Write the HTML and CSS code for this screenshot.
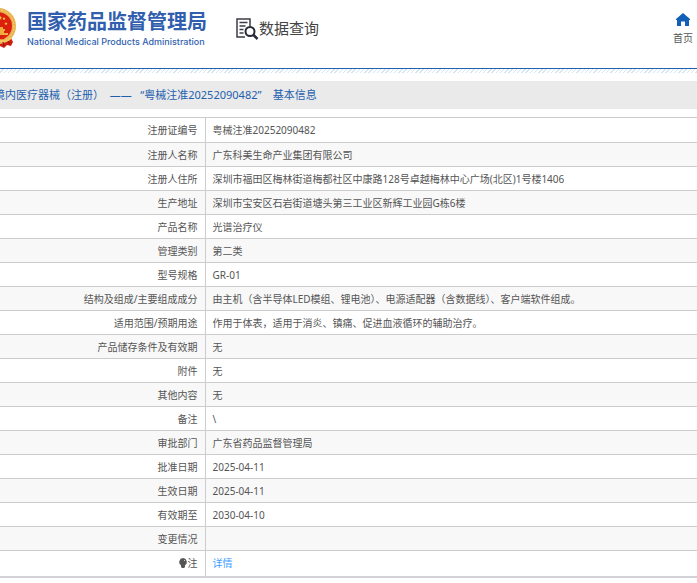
FILE: index.html
```html
<!DOCTYPE html>
<html lang="zh-CN">
<head>
<meta charset="utf-8">
<title>国家药品监督管理局 数据查询</title>
<link rel="stylesheet" href="styles.css">
</head>
<body>
<header class="header">
  <svg class="emblem" viewBox="0 0 17 40" aria-hidden="true">
    <path d="M0 31 L11 30 L13 34 L11 38 L7 37 L4 40 L0 38 Z" fill="#cf2013"/>
    <circle cx="-2" cy="18" r="18" fill="#e9b04c"/>
    <circle cx="-2" cy="18" r="16" fill="none" stroke="#f6d57c" stroke-width="1" stroke-dasharray="2 1"/>
    <circle cx="-2" cy="18" r="14" fill="#dd1f10"/>
    <path d="M0 8l1 1 1 .3-1 1 .3 1.400L0 11zM4 9l.5 1 1.100.2-.8.8.200 1.100-1-.5-1 .5.200-1.100-.8-.8 1.100-.2zM6 14l.5 1 1.100.2-.8.8.200 1.100-1-.5-1 .5.200-1.100-.8-.8 1.100-.2z" fill="#f8c53f"/>
    <path d="M0 19h3v2h2v2H4v2h4v2H0z" fill="#f0ad3e"/>
    <path d="M0 32q7 3 11-2" fill="none" stroke="#f3c65c" stroke-width="1.500"/>
    <path d="M3 34l1 4M8 33l2 3" stroke="#951008" stroke-width="1"/>
  </svg>
  <div class="brand">
    <div class="brand-cn">国家药品监督管理局</div>
    <div class="brand-en">National Medical Products Administration</div>
  </div>
  <div class="section">
    <svg class="section-icon" viewBox="0 0 23 22" aria-hidden="true">
      <path d="M14 8V1H1v18h8" fill="none" stroke="#3c3c46" stroke-width="1.500"/>
      <path d="M3.500 4.500h8M3.500 8h6M3.500 11.500h4M3.500 15h4" stroke="#3c3c46" stroke-width="1.300"/>
      <circle cx="14" cy="13.500" r="4.500" fill="#fff" stroke="#262838" stroke-width="2"/>
      <path d="M17.500 17l4 4" stroke="#262838" stroke-width="2.500"/>
    </svg>
    <span>数据查询</span>
  </div>
  <a class="home" href="#">
    <svg class="home-icon" viewBox="0 0 14 13" aria-hidden="true">
      <path d="M7 0l7 6v1h-1v6H9V8.500H5V13H1V7H0V6z" fill="#1160b5"/>
    </svg>
    <span>首页</span>
  </a>
</header>
<main>
  <h1 class="title">境内医疗器械（注册）&nbsp; ——&nbsp; &nbsp;“粤械注准20252090482”&nbsp; &nbsp; 基本信息</h1>
  <table class="info">
    <tbody>
      <tr><th scope="row">注册证编号</th><td>粤械注准20252090482</td></tr>
      <tr><th scope="row">注册人名称</th><td>广东科美生命产业集团有限公司</td></tr>
      <tr><th scope="row">注册人住所</th><td>深圳市福田区梅林街道梅都社区中康路128号卓越梅林中心广场(北区)1号楼1406</td></tr>
      <tr><th scope="row">生产地址</th><td>深圳市宝安区石岩街道塘头第三工业区新辉工业园G栋6楼</td></tr>
      <tr><th scope="row">产品名称</th><td>光谱治疗仪</td></tr>
      <tr><th scope="row">管理类别</th><td>第二类</td></tr>
      <tr><th scope="row">型号规格</th><td>GR-01</td></tr>
      <tr><th scope="row">结构及组成/主要组成成分</th><td>由主机（含半导体LED模组、锂电池）、电源适配器（含数据线）、客户端软件组成。</td></tr>
      <tr><th scope="row">适用范围/预期用途</th><td>作用于体表，适用于消炎、镇痛、促进血液循环的辅助治疗。</td></tr>
      <tr><th scope="row">产品储存条件及有效期</th><td>无</td></tr>
      <tr><th scope="row">附件</th><td>无</td></tr>
      <tr><th scope="row">其他内容</th><td>无</td></tr>
      <tr><th scope="row">备注</th><td>\</td></tr>
      <tr><th scope="row">审批部门</th><td>广东省药品监督管理局</td></tr>
      <tr><th scope="row">批准日期</th><td>2025-04-11</td></tr>
      <tr><th scope="row">生效日期</th><td>2025-04-11</td></tr>
      <tr><th scope="row">有效期至</th><td>2030-04-10</td></tr>
      <tr><th scope="row">变更情况</th><td></td></tr>
      <tr><th scope="row"><svg class="bulb" viewBox="0 0 8 10" aria-hidden="true"><path d="M4 0a4 4 0 0 1 2 7.300V9L5 10H3L2 9V7.300A4 4 0 0 1 4 0z" fill="#555"/><path d="M5 2l1 1" stroke="#ccc"/></svg>注</th><td><a href="#">详情</a></td></tr>
    </tbody>
  </table>
</main>
</body>
</html>
```
FILE: styles.css
```css
* {
  box-sizing: border-box;
}

body {
  margin: 0;
  background: #fff;
  color: #555;
  font: 10px/16px "Noto Sans", "Noto Sans CJK SC", sans-serif;
}

a {
  color: #409eff;
  text-decoration: none;
}

.header {
  display: flex;
  align-items: flex-start;
  height: 73px;
  padding-top: 8px;
  background:
    linear-gradient(#1f62ad, #1f62ad) 0 68px / 100% 1px no-repeat,
    repeating-linear-gradient(135deg, #fff 0 2px, #d5e6f2 2px 3px) 0 69px / 100% 4px no-repeat;
}

.emblem {
  width: 17px;
  height: 40px;
}

.brand {
  margin-left: 10px;
  padding-top: 2px;
  color: #315fae;
}

.brand-cn {
  font-size: 20px;
  line-height: 24px;
  font-weight: 700;
}

.brand-en {
  font: 500 9px/16px Inter, sans-serif;
}

.section {
  display: flex;
  margin-left: 29px;
  padding-top: 10px;
  color: #444;
  font-size: 15px;
  line-height: 20px;
}

.section-icon {
  width: 23px;
  height: 22px;
}

.home {
  display: flex;
  flex-direction: column;
  align-items: center;
  gap: 4px;
  margin-left: auto;
  padding: 5px 4px 0 0;
  color: #555;
}

.home-icon {
  width: 14px;
  height: 13px;
}

.title {
  margin: 8px 0;
  height: 28px;
  overflow: hidden;
  background: #eaeaea;
  color: #1e5fae;
  font-size: 11px;
  line-height: 28px;
  font-weight: 400;
  white-space: nowrap;
  text-indent: -6px;
}

.info {
  width: 100%;
  border-collapse: collapse;
  border-top: 1px solid #ccc;
  border-bottom: 2px solid #d2d2d6;
}

.info tr:nth-child(even) {
  background: #f8f8f8;
}

.info th,
.info td {
  height: 24px;
  padding: 0 7px;
  border-bottom: 1px solid #ccc;
  font-weight: 400;
}

.info tr:first-child > * {
  height: 25px;
}

.info tr:last-child > * {
  height: 26px;
}

.info th {
  width: 205px;
  border-right: 1px solid #ccc;
  text-align: right;
}

.info td {
  text-align: left;
}

.bulb {
  width: 8px;
  height: 10px;
  margin-right: 1px;
  vertical-align: -1px;
}
```
